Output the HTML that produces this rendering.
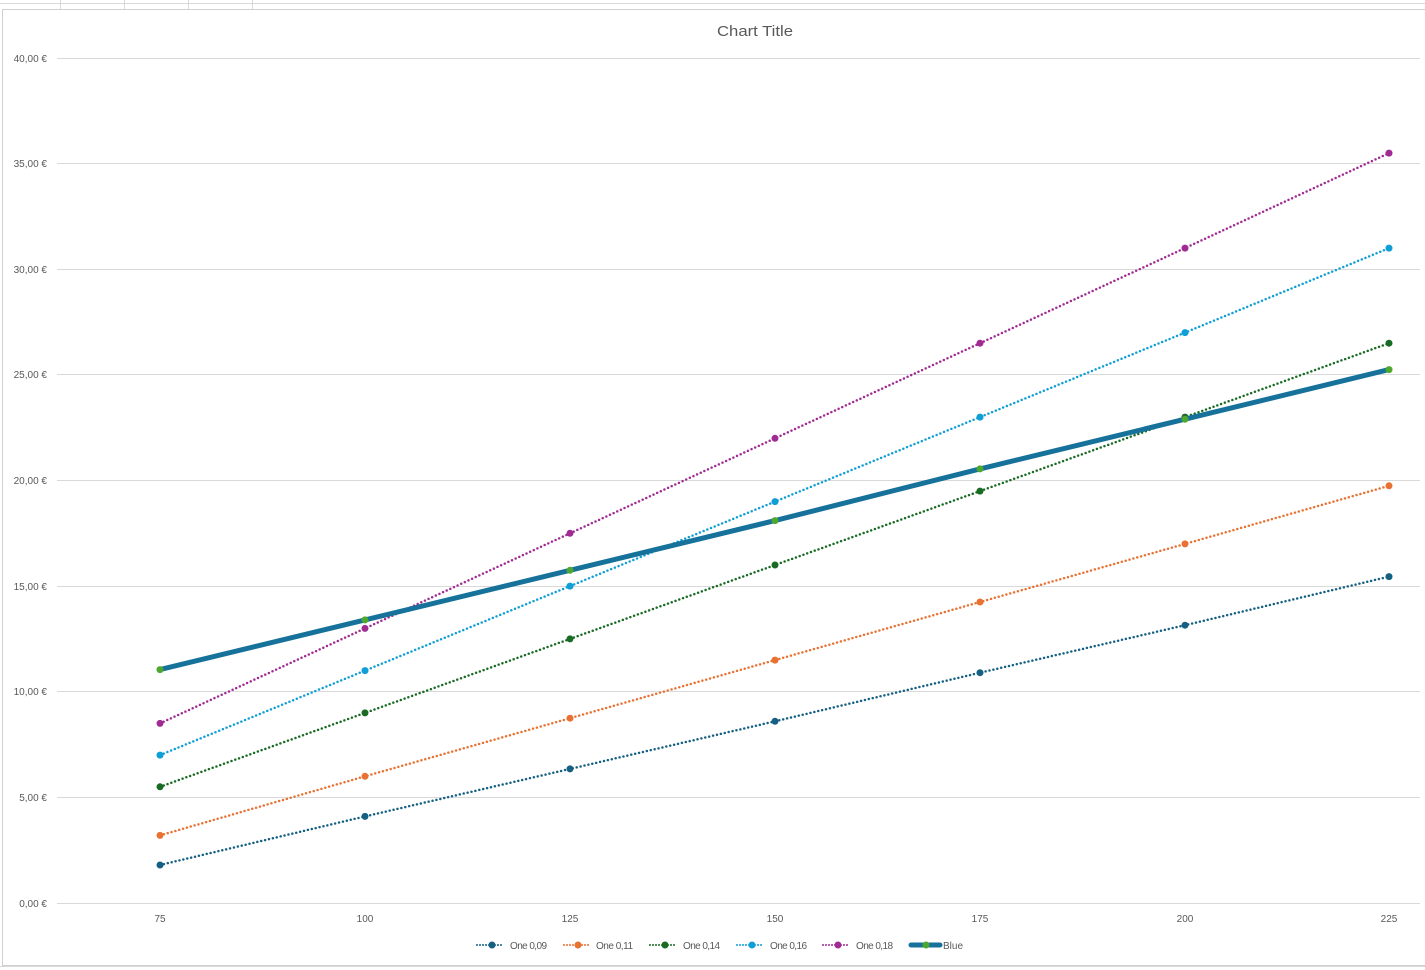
<!DOCTYPE html>
<html><head><meta charset="utf-8"><style>
html,body{margin:0;padding:0;background:#fff;width:1425px;height:970px;overflow:hidden}
svg{display:block;font-family:"Liberation Sans",sans-serif}
</style></head><body>
<svg width="1425" height="970" viewBox="0 0 1425 970">
<g stroke="#d9d9d9" stroke-width="1">
<line x1="0" y1="3.5" x2="1425" y2="3.5"/>
<line x1="60.5" y1="0" x2="60.5" y2="10"/><line x1="124.5" y1="0" x2="124.5" y2="10"/><line x1="188.5" y1="0" x2="188.5" y2="10"/><line x1="252.5" y1="0" x2="252.5" y2="10"/>
<line x1="0" y1="966.5" x2="1425" y2="966.5"/>
</g>
<rect x="2.5" y="9.5" width="1430" height="956" fill="#fff" stroke="#d0d0d0"/>
<text x="755" y="36" text-anchor="middle" font-size="15" fill="#595959" textLength="76" lengthAdjust="spacingAndGlyphs">Chart Title</text>
<g stroke="#d9d9d9" stroke-width="1">
<line x1="57" y1="903.5" x2="1420" y2="903.5"/><line x1="57" y1="797.5" x2="1420" y2="797.5"/><line x1="57" y1="691.5" x2="1420" y2="691.5"/><line x1="57" y1="586.5" x2="1420" y2="586.5"/><line x1="57" y1="480.5" x2="1420" y2="480.5"/><line x1="57" y1="374.5" x2="1420" y2="374.5"/><line x1="57" y1="269.5" x2="1420" y2="269.5"/><line x1="57" y1="163.5" x2="1420" y2="163.5"/><line x1="57" y1="58.5" x2="1420" y2="58.5"/>
</g>
<g font-size="10" fill="#595959" text-anchor="end">
<text x="47" y="907">0,00 €</text><text x="47" y="801">5,00 €</text><text x="47" y="695">10,00 €</text><text x="47" y="590">15,00 €</text><text x="47" y="484">20,00 €</text><text x="47" y="378">25,00 €</text><text x="47" y="273">30,00 €</text><text x="47" y="167">35,00 €</text><text x="47" y="62">40,00 €</text>
</g>
<g font-size="10" fill="#595959" text-anchor="middle">
<text x="160" y="922">75</text><text x="365" y="922">100</text><text x="570" y="922">125</text><text x="775" y="922">150</text><text x="980" y="922">175</text><text x="1185" y="922">200</text><text x="1389" y="922">225</text>
</g>
<g fill="none" stroke-width="2.5" stroke-dasharray="0 4" stroke-linecap="round">
<polyline stroke="#156082" points="160,865 365,816.4 570,768.9 775,721.3 980,672.7 1185,625.2 1389,576.6"/>
<polyline stroke="#E97132" points="160,835.4 365,776.3 570,718.2 775,660.1 980,602 1185,543.9 1389,485.8"/>
<polyline stroke="#196B24" points="160,786.8 365,712.9 570,638.9 775,565 980,491.1 1185,417.1 1389,343.2"/>
<polyline stroke="#0F9ED5" points="160,755.1 365,670.6 570,586.1 775,501.6 980,417.1 1185,332.6 1389,248.1"/>
<polyline stroke="#A02B93" points="160,723.4 365,628.4 570,533.3 775,438.3 980,343.2 1185,248.1 1389,153.1"/>
</g>
<g fill="#156082"><circle cx="160" cy="865" r="3.5"/><circle cx="365" cy="816.4" r="3.5"/><circle cx="570" cy="768.9" r="3.5"/><circle cx="775" cy="721.3" r="3.5"/><circle cx="980" cy="672.7" r="3.5"/><circle cx="1185" cy="625.2" r="3.5"/><circle cx="1389" cy="576.6" r="3.5"/></g>
<g fill="#E97132"><circle cx="160" cy="835.4" r="3.5"/><circle cx="365" cy="776.3" r="3.5"/><circle cx="570" cy="718.2" r="3.5"/><circle cx="775" cy="660.1" r="3.5"/><circle cx="980" cy="602" r="3.5"/><circle cx="1185" cy="543.9" r="3.5"/><circle cx="1389" cy="485.8" r="3.5"/></g>
<g fill="#196B24"><circle cx="160" cy="786.8" r="3.5"/><circle cx="365" cy="712.9" r="3.5"/><circle cx="570" cy="638.9" r="3.5"/><circle cx="775" cy="565" r="3.5"/><circle cx="980" cy="491.1" r="3.5"/><circle cx="1185" cy="417.1" r="3.5"/><circle cx="1389" cy="343.2" r="3.5"/></g>
<g fill="#0F9ED5"><circle cx="160" cy="755.1" r="3.5"/><circle cx="365" cy="670.6" r="3.5"/><circle cx="570" cy="586.1" r="3.5"/><circle cx="775" cy="501.6" r="3.5"/><circle cx="980" cy="417.1" r="3.5"/><circle cx="1185" cy="332.6" r="3.5"/><circle cx="1389" cy="248.1" r="3.5"/></g>
<g fill="#A02B93"><circle cx="160" cy="723.4" r="3.5"/><circle cx="365" cy="628.4" r="3.5"/><circle cx="570" cy="533.3" r="3.5"/><circle cx="775" cy="438.3" r="3.5"/><circle cx="980" cy="343.2" r="3.5"/><circle cx="1185" cy="248.1" r="3.5"/><circle cx="1389" cy="153.1" r="3.5"/></g>
<polyline fill="none" stroke="#16729a" stroke-width="5" stroke-linejoin="round" points="160,669.6 365,619.9 570,570.3 775,520.6 980,468.9 1185,419.2 1389,369.6"/>
<g fill="#4EA72E"><circle cx="160" cy="669.6" r="3.5"/><circle cx="365" cy="619.9" r="3.5"/><circle cx="570" cy="570.3" r="3.5"/><circle cx="775" cy="520.6" r="3.5"/><circle cx="980" cy="468.9" r="3.5"/><circle cx="1185" cy="419.2" r="3.5"/><circle cx="1389" cy="369.6" r="3.5"/></g>
<g stroke-width="2" stroke-dasharray="0 3" stroke-linecap="round">
<line x1="477" y1="945" x2="502" y2="945" stroke="#156082"/>
<line x1="564" y1="945" x2="589" y2="945" stroke="#E97132"/>
<line x1="650" y1="945" x2="675" y2="945" stroke="#196B24"/>
<line x1="737" y1="945" x2="762" y2="945" stroke="#0F9ED5"/>
<line x1="823" y1="945" x2="848" y2="945" stroke="#A02B93"/>
</g>
<circle cx="492" cy="945" r="3.5" fill="#156082"/><circle cx="578" cy="945" r="3.5" fill="#E97132"/><circle cx="665" cy="945" r="3.5" fill="#196B24"/><circle cx="752" cy="945" r="3.5" fill="#0F9ED5"/><circle cx="838" cy="945" r="3.5" fill="#A02B93"/>
<line x1="911" y1="945" x2="940" y2="945" stroke="#16729a" stroke-width="5" stroke-linecap="round"/>
<circle cx="926" cy="945" r="3.5" fill="#4EA72E"/>
<g font-size="10" fill="#595959" lengthAdjust="spacingAndGlyphs">
<text x="510" y="949" textLength="37">One 0,09</text><text x="596" y="949" textLength="37">One 0,11</text><text x="683" y="949" textLength="37">One 0,14</text><text x="770" y="949" textLength="37">One 0,16</text><text x="856" y="949" textLength="37">One 0,18</text><text x="943" y="949" textLength="20">Blue</text>
</g>
</svg>
</body></html>
